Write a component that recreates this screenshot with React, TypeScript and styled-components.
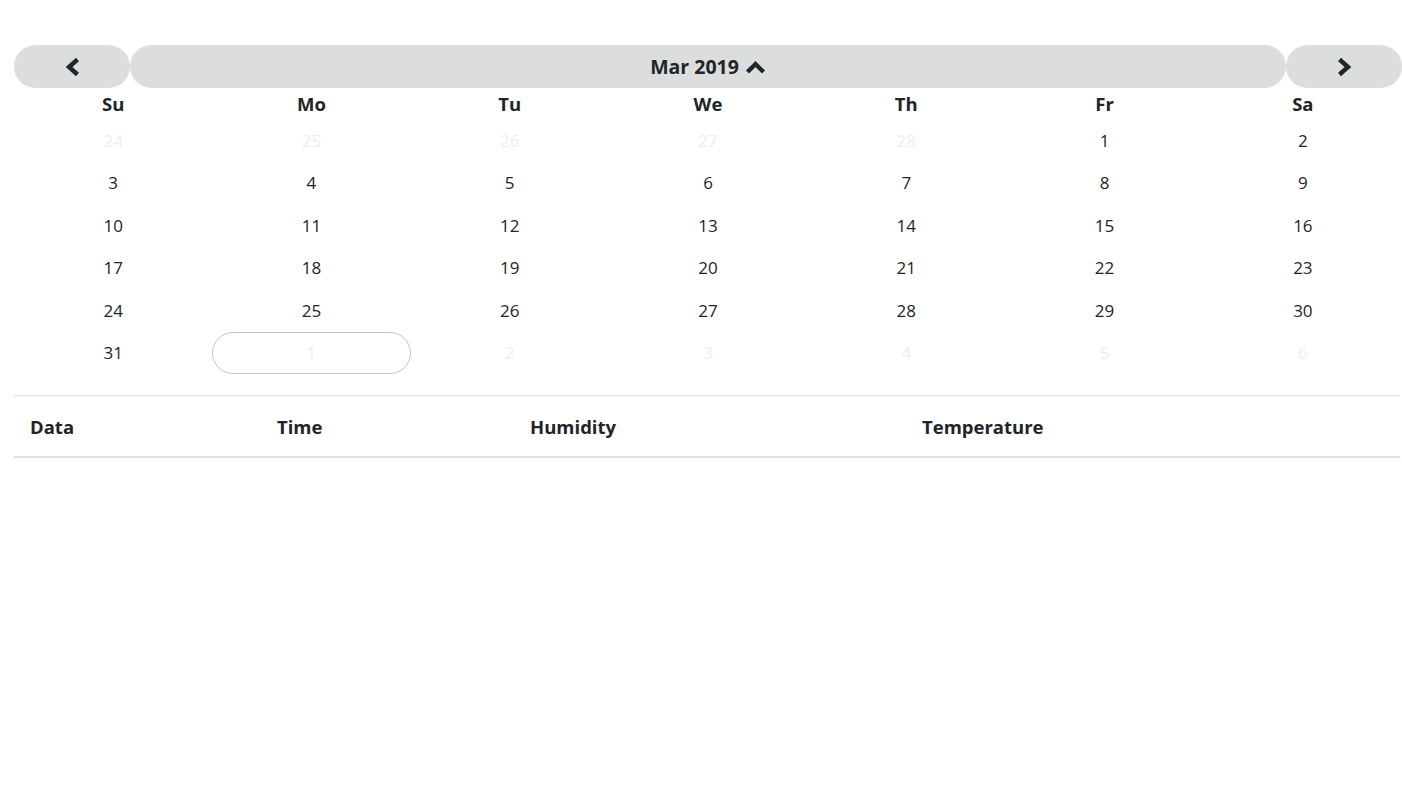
import React from 'react';
import styled, { createGlobalStyle } from 'styled-components';

const GlobalStyle = createGlobalStyle`
    body {
        margin: 0;
        background: #ffffff;
        font-family: "Open Sans", "Noto Sans", "Liberation Sans", sans-serif;
        color: #212529;
        overflow: hidden;
    }
`;

const Page = styled.div`
    padding: 45px 0 0 14px;
`;

const Calendar = styled.div`
    width: 1388px;
`;

const NavBar = styled.div`
    display: grid;
    grid-template-columns: 116px 1fr 116px;
    height: 43px;
`;

const NavButton = styled.button`
    border: none;
    background: #dcdddd;
    border-radius: 22px;
    display: flex;
    align-items: center;
    justify-content: center;
    gap: 6px;
    padding: 0;
    font-family: inherit;
    font-size: 19.5px;
    font-weight: 700;
    color: #212529;
    cursor: pointer;
`;

const Grid = styled.div`
    display: grid;
    grid-template-columns: repeat(7, 1fr);
`;

const DayName = styled.div`
    height: 31px;
    display: flex;
    align-items: center;
    justify-content: center;
    font-size: 18.5px;
    font-weight: 700;
`;

const DayCell = styled.div<{ faded?: boolean; selected?: boolean }>`
    height: 42.5px;
    box-sizing: border-box;
    display: flex;
    align-items: center;
    justify-content: center;
    font-size: 17px;
    color: ${p => (p.faded ? '#eeeeee' : '#212529')};
    border: 1px solid ${p => (p.selected ? '#c4c4c4' : 'transparent')};
    border-radius: 22px;
`;

const Table = styled.table`
    margin-top: 21px;
    width: 1386px;
    border-collapse: collapse;
    table-layout: fixed;
`;

const HeadCell = styled.th<{ w: number }>`
    box-sizing: border-box;
    width: ${p => p.w}px;
    text-align: left;
    padding: 18px 16px 17px;
    font-size: 18.5px;
    font-weight: 700;
    white-space: nowrap;
    border-top: 1px solid #dee2e6;
    border-bottom: 2px solid #dee2e6;
`;

const Chevron = ({ dir }: { dir: 'left' | 'right' | 'up' }) => {
    if (dir === 'up') {
        return (
            <svg width="21" height="14" viewBox="0 0 21 14">
                <polyline points="2.5,12 10.5,4 18.5,12" fill="none" stroke="#212529" strokeWidth="4.4" />
            </svg>
        );
    }
    const pts = dir === 'left' ? '12.5,2.5 4,10 12.5,17.5' : '2.5,2.5 11,10 2.5,17.5';
    return (
        <svg width="15" height="20" viewBox="0 0 15 20">
            <polyline points={pts} fill="none" stroke="#212529" strokeWidth="4.4" />
        </svg>
    );
};

const days = ['Su', 'Mo', 'Tu', 'We', 'Th', 'Fr', 'Sa'];

const buildCells = () => {
    const cells: { n: number; faded: boolean }[] = [];
    [24, 25, 26, 27, 28].forEach(n => cells.push({ n, faded: true }));
    for (let n = 1; n <= 31; n++) cells.push({ n, faded: false });
    for (let n = 1; n <= 6; n++) cells.push({ n, faded: true });
    return cells;
};

export default function App() {
    const cells = buildCells();
    return (
        <>
            <GlobalStyle />
            <Page>
                <Calendar>
                    <NavBar>
                        <NavButton><Chevron dir="left" /></NavButton>
                        <NavButton>Mar 2019 <Chevron dir="up" /></NavButton>
                        <NavButton><Chevron dir="right" /></NavButton>
                    </NavBar>
                    <Grid>
                        {days.map(d => <DayName key={d}>{d}</DayName>)}
                        {cells.map((c, i) => (
                            <DayCell key={i} faded={c.faded} selected={i === 36}>{c.n}</DayCell>
                        ))}
                    </Grid>
                </Calendar>
                <Table>
                    <thead>
                        <tr>
                            <HeadCell w={247}>Data</HeadCell>
                            <HeadCell w={253}>Time</HeadCell>
                            <HeadCell w={392}>Humidity</HeadCell>
                            <HeadCell w={494}>Temperature</HeadCell>
                        </tr>
                    </thead>
                    <tbody />
                </Table>
            </Page>
        </>
    );
}
